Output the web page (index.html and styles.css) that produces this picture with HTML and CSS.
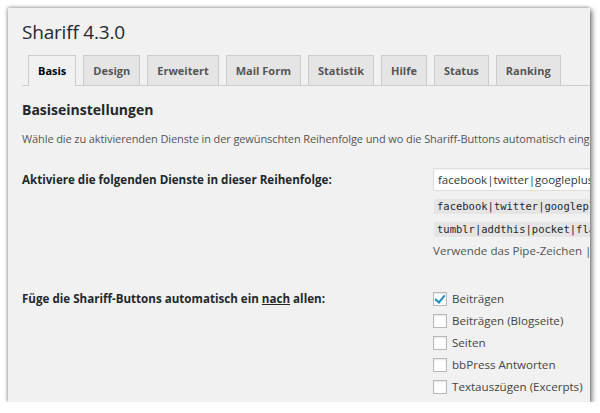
FILE: index.html
```html
<!DOCTYPE html>
<html lang="de">
<head>
  <meta charset="UTF-8">
  <title>Shariff 4.3.0</title>
  <link rel="stylesheet" href="styles.css">
</head>
<body>
  <div class="window">
    <h1 class="title">Shariff 4.3.0</h1>

    <nav class="tabs">
      <a class="tab active">Basis</a>
      <a class="tab">Design</a>
      <a class="tab">Erweitert</a>
      <a class="tab">Mail Form</a>
      <a class="tab">Statistik</a>
      <a class="tab">Hilfe</a>
      <a class="tab">Status</a>
      <a class="tab">Ranking</a>
    </nav>

    <h2 class="section-title">Basiseinstellungen</h2>
    <p class="intro">Wähle die zu aktivierenden Dienste in der gewünschten Reihenfolge und wo die Shariff-Buttons automatisch eingefügt werden sollen.</p>

    <div class="form-row">
      <div class="label">Aktiviere die folgenden Dienste in dieser Reihenfolge:</div>
      <div class="field">
        <input class="text-input" type="text" value="facebook|twitter|googleplus">
        <code>facebook|twitter|googleplus|whatsapp|threema|pinterest</code>
        <code>tumblr|addthis|pocket|flattr|diaspora|reddit|stumbleupon</code>
        <p class="hint">Verwende das Pipe-Zeichen | (Alt Gr + &lt;) zwischen den Diensten.</p>
      </div>
    </div>

    <div class="form-row second">
      <div class="label">Füge die Shariff-Buttons automatisch ein <u>nach</u> allen:</div>
      <div class="field checks">
        <label class="check"><span class="box checked"></span>Beiträgen</label>
        <label class="check"><span class="box"></span>Beiträgen (Blogseite)</label>
        <label class="check"><span class="box"></span>Seiten</label>
        <label class="check"><span class="box"></span>bbPress Antworten</label>
        <label class="check"><span class="box"></span>Textauszügen (Excerpts)</label>
      </div>
    </div>
  </div>
</body>
</html>
```

FILE: styles.css
```css
/* Page around the screenshot window */
body {
  margin: 0;
  background: #fff;
  font-family: "Open Sans", "Noto Sans", sans-serif;
  color: #23282d;
}

.window {
  margin: 8px 0 0 8px;
  width: 582px;
  height: 394px;
  box-sizing: border-box;
  padding: 11px 0 0 14px;
  background: #f1f1f1;
  overflow: hidden;
  box-shadow: 2px 2px 5px rgba(0, 0, 0, 0.55), -1px -1px 3px rgba(0, 0, 0, 0.25);
}

.title {
  margin: 0;
  font-size: 19px;
  line-height: 26px;
  font-weight: 400;
  letter-spacing: -0.2px;
  color: #23282d;
}

/* Tabs */
.tabs {
  display: flex;
  gap: 7px;
  margin-top: 10px;
  padding-left: 6px;
  border-bottom: 1px solid #ccc;
  white-space: nowrap;
}

.tab {
  display: block;
  height: 30px;
  box-sizing: border-box;
  padding: 0 9px;
  margin-bottom: -1px;
  border: 1px solid #ccc;
  border-bottom: none;
  background: #e5e5e5;
  color: #555;
  font-size: 11px;
  font-weight: 700;
  line-height: 30px;
}

.tab.active {
  background: #f1f1f1;
  color: #000;
  height: 31px;
}

/* Section */
.section-title {
  margin: 14px 0 0;
  font-size: 14px;
  line-height: 20px;
  font-weight: 700;
  color: #23282d;
}

.intro {
  margin: 10px 0 0;
  font-size: 11px;
  line-height: 18px;
  letter-spacing: -0.1px;
  color: #555;
  white-space: nowrap;
}

.form-row {
  display: flex;
  margin-top: 20px;
}

.form-row.second {
  margin-top: 30px;
}

.label {
  width: 411px;
  flex: none;
  font-size: 11.6px;
  font-weight: 700;
  line-height: 23px;
}

.second .label {
  line-height: 18px;
}

.field {
  display: flex;
  flex-direction: column;
  align-items: flex-start;
  white-space: nowrap;
}

.text-input {
  width: 240px;
  height: 23px;
  box-sizing: border-box;
  margin: 0 0 8px;
  padding: 0 4px;
  border: 1px solid #ddd;
  background: #fff;
  font-family: inherit;
  font-size: 11.5px;
  color: #32373c;
  box-shadow: inset 0 1px 2px rgba(0, 0, 0, 0.07);
}

code {
  display: block;
  margin: 0 0 8px 1px;
  padding: 0 3px;
  background: #e5e5e5;
  font-family: "DejaVu Sans Mono", monospace;
  font-size: 10.5px;
  line-height: 15px;
  color: #23282d;
}

.hint {
  margin: -3px 0 0;
  font-size: 11.6px;
  line-height: 18px;
  color: #555;
}

.checks {
  gap: 4px;
}

.check {
  display: flex;
  align-items: center;
  gap: 5px;
  font-size: 11.6px;
  line-height: 18px;
  color: #444;
}

.box {
  width: 14px;
  height: 14px;
  box-sizing: border-box;
  border: 1px solid #b4b9be;
  background: #fff;
  box-shadow: inset 0 1px 2px rgba(0, 0, 0, 0.1);
  position: relative;
}

.box.checked::after {
  content: '';
  position: absolute;
  left: 3px;
  top: 0;
  width: 4px;
  height: 8px;
  border: solid #1e8cbe;
  border-width: 0 2px 2px 0;
  transform: rotate(40deg);
}
```
